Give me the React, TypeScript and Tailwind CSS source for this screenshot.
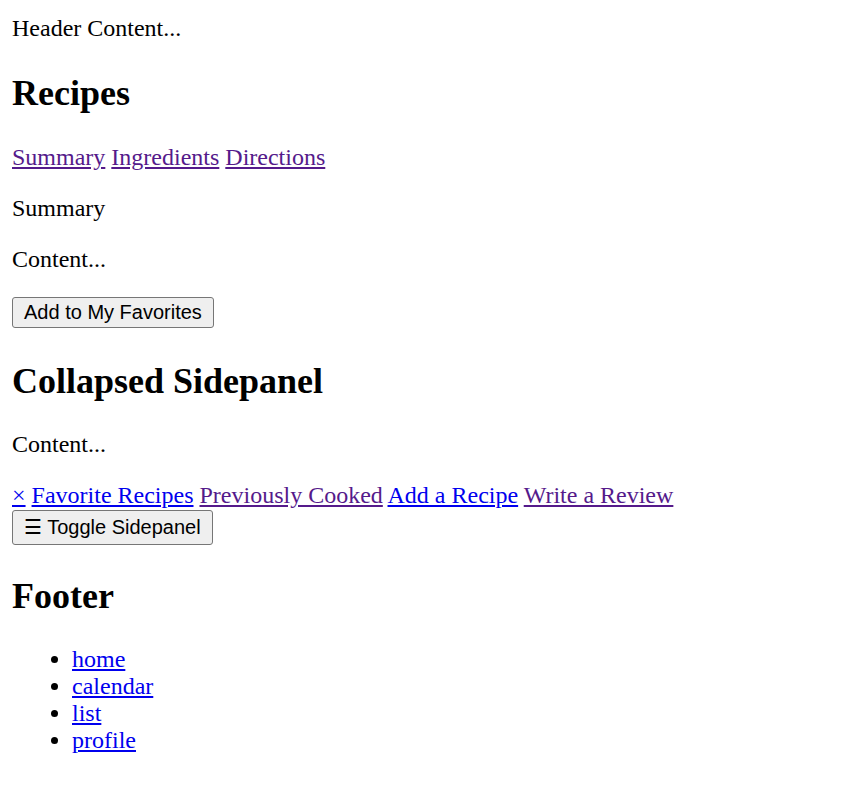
const visited = 'text-[#551a8b] underline';
const link = 'text-[#0000ee] underline';

function NativeButton({ children, className }: { children: React.ReactNode; className?: string }) {
  return (
    <button
      className={`inline-flex items-center bg-[#efefef] border border-[#767676] rounded-[3px] px-[11px] font-['Liberation_Sans',Arial,sans-serif] text-[20px] leading-[23px] text-black ${className ?? ''}`}
    >
      {children}
    </button>
  );
}

export default function App() {
  return (
    <div className="bg-white text-black font-['Liberation_Serif','Times_New_Roman',serif] text-[24px] leading-[27.6px] px-3 pt-[15px] pb-3 min-h-[801px]">
      <div>Header Content...</div>

      <h2 className="text-[36px] font-bold leading-[41.4px] mt-[30px] mb-[30px]">Recipes</h2>
      <p>
        <a className={visited} href="#">Summary</a>{' '}
        <a className={visited} href="#">Ingredients</a>{' '}
        <a className={visited} href="#">Directions</a>
      </p>
      <p className="mt-[23px]">Summary</p>
      <p className="mt-6">Content...</p>
      <div className="mt-[23px] leading-none">
        <NativeButton className="h-[31px]">Add to My Favorites</NativeButton>
      </div>

      <h2 className="text-[36px] font-bold leading-[41.4px] mt-[33px] mb-[29px]">Collapsed Sidepanel</h2>
      <p>Content...</p>
      <div className="mt-[23px]">
        <a className={link} href="#">×</a>{' '}
        <a className={link} href="#">Favorite Recipes</a>{' '}
        <a className={visited} href="#">Previously Cooked</a>{' '}
        <a className={link} href="#">Add a Recipe</a>{' '}
        <a className={visited} href="#">Write a Review</a>
      </div>
      <div className="leading-none mt-[1px]">
        <NativeButton className="h-[35px]">☰ Toggle Sidepanel</NativeButton>
      </div>

      <h2 className="text-[36px] font-bold leading-[41.4px] mt-[31px] mb-[28px]">Footer</h2>
      <ul className="list-disc pl-[60px] leading-[27px]">
        <li><a className={link} href="#">home</a></li>
        <li><a className={link} href="#">calendar</a></li>
        <li><a className={link} href="#">list</a></li>
        <li><a className={link} href="#">profile</a></li>
      </ul>
    </div>
  );
}
